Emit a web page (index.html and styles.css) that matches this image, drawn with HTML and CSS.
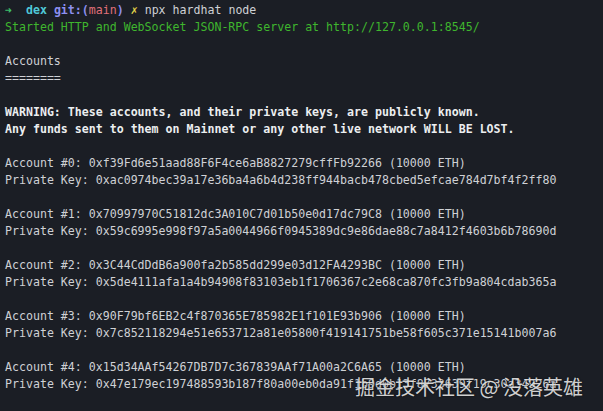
FILE: index.html
```html
<!DOCTYPE html>
<html>
<head>
<meta charset="utf-8">
<link rel="stylesheet" href="styles.css">
</head>
<body>
<main class="term">
<pre class="out"><span class="arrow">➜</span>  <span class="dir">dex</span> <span class="git">git:(</span><span class="branch">main</span><span class="git">)</span> <span class="dirty">✗</span> npx hardhat node
<span class="ok">Started HTTP and WebSocket JSON-RPC server at http://127.0.0.1:8545/</span>

Accounts
========

<b class="warn">WARNING: These accounts, and their private keys, are publicly known.
Any funds sent to them on Mainnet or any other live network WILL BE LOST.</b>

Account #0: 0xf39Fd6e51aad88F6F4ce6aB8827279cffFb92266 (10000 ETH)
Private Key: 0xac0974bec39a17e36ba4a6b4d238ff944bacb478cbed5efcae784d7bf4f2ff80

Account #1: 0x70997970C51812dc3A010C7d01b50e0d17dc79C8 (10000 ETH)
Private Key: 0x59c6995e998f97a5a0044966f0945389dc9e86dae88c7a8412f4603b6b78690d

Account #2: 0x3C44CdDdB6a900fa2b585dd299e03d12FA4293BC (10000 ETH)
Private Key: 0x5de4111afa1a4b94908f83103eb1f1706367c2e68ca870fc3fb9a804cdab365a

Account #3: 0x90F79bf6EB2c4f870365E785982E1f101E93b906 (10000 ETH)
Private Key: 0x7c852118294e51e653712a81e05800f419141751be58f605c371e15141b007a6

Account #4: 0x15d34AAf54267DB7D7c367839AAf71A00a2C6A65 (10000 ETH)
Private Key: 0x47e179ec197488593b187f80a00eb0da91f1b9d0b13f8733639f19c30a34926a</pre>
<div class="mark">掘金技术社区 @ 没落英雄</div>
</main>
</body>
</html>
```
FILE: styles.css
```css
html, body {
  margin: 0;
  padding: 0;
  background: #1a1d24;
}
.term {
  position: relative;
  width: 603px;
  height: 411px;
  overflow: hidden;
  background: #1b1e25;
}
.out {
  margin: 0;
  padding: 2px 0 0 5px;
  font-family: "DejaVu Sans Mono", monospace;
  font-size: 11.6px;
  line-height: 17px;
  color: #cfd1d5;
  white-space: pre;
}
.arrow { color: #3dbf6a; }
.dir { color: #4fc8d8; font-weight: bold; }
.git { color: #8d8ff0; font-weight: bold; }
.branch { color: #e0707a; }
.dirty { color: #e6d94a; }
.ok { color: #3fb62e; }
.warn { color: #eceef0; font-weight: bold; }
.mark {
  position: absolute;
  left: 355px;
  top: 374px;
  font-family: "Noto Sans CJK SC", sans-serif;
  font-size: 20px;
  line-height: 26px;
  color: rgba(235, 235, 235, 0.88);
  text-shadow: 0 0 2px rgba(0,0,0,0.6);
  white-space: nowrap;
}
```
